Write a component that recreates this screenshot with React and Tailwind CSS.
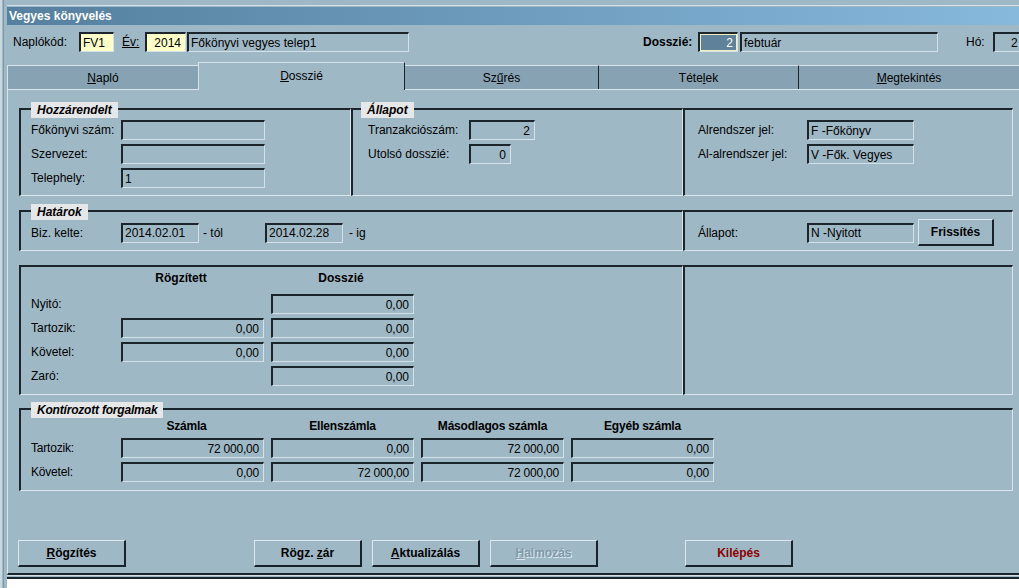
import React from "react";

const sunken =
  "flex h-[20px] shrink-0 items-center overflow-hidden whitespace-nowrap border-t-2 border-l-2 border-r border-b border-t-[#1c252c] border-l-[#1c252c] border-r-[#d5e1e8] border-b-[#d5e1e8] px-[2px]";

const Field = ({ value = "", right, className = "" }) => (
  <div className={`${sunken} ${right ? "justify-end pr-[4px]" : ""} ${className}`}>{value}</div>
);

const Box = ({ title, titleLeft = "left-[10px]", className = "", children }) => (
  <div
    className={`relative shrink-0 border-t-2 border-l-2 border-r border-b border-t-[#1c252c] border-l-[#1c252c] border-r-[#dbe5eb] border-b-[#dbe5eb] ${className}`}
  >
    {title && (
      <div className={`absolute top-[-8px] ${titleLeft} h-[16px] bg-[#e6e7e8] px-[6px] font-bold italic leading-[16px]`}>
        {title}
      </div>
    )}
    {children}
  </div>
);

const Row = ({ label, lw, children }) => (
  <div className="flex items-center">
    <span className={`shrink-0 whitespace-nowrap ${lw}`}>{label}</span>
    {children}
  </div>
);

const Btn = ({ children, className = "w-[108px]" }) => (
  <button
    className={`flex h-[27px] shrink-0 items-center justify-center border-t border-l border-t-[#dde7ed] border-l-[#dde7ed] border-r-2 border-b-2 border-r-[#17222a] border-b-[#17222a] font-bold ${className}`}
  >
    {children}
  </button>
);

const Tab = ({ children, className = "" }) => (
  <div
    className={`flex h-[24px] shrink-0 items-center justify-center border-t border-t-[#d8e3e9] bg-[#87a2b2] ${className}`}
  >
    {children}
  </div>
);

export default function App() {
  return (
    <div className="flex h-[588px] w-[1019px] overflow-hidden bg-[#9fb8c6] font-['Liberation_Sans',Arial,sans-serif] text-[12px] leading-[16px] text-black">
      {/* window frame */}
      <div className="flex h-full w-[7px] shrink-0 border-l-2 border-l-[#c9d7df]">
        <div className="ml-px h-full w-px bg-[#7f98a8]" />
      </div>

      <div className="flex w-[1012px] shrink-0 flex-col">
        <div className="h-[7px] pt-[5px]">
          <div className="h-px bg-[#d3e0e8]" />
        </div>
        <div className="flex h-[18px] items-center bg-linear-to-r from-[#55809f] to-[#87b9dd] pl-[2px] font-bold text-white">
          Vegyes könyvelés
        </div>

        {/* header */}
        <div className="flex h-[37px] items-start overflow-hidden pt-[7px]">
          <Row label="Naplókód:" lw="w-[72px] pl-[6px]">
            <Field value="FV1" className="w-[35px] bg-[#ffffc8]" />
          </Row>
          <span className="ml-[8px] w-[23px] shrink-0 leading-[20px] underline">Év:</span>
          <Field value="2014" right className="w-[41px] bg-[#ffffc8]" />
          <Field value="Főkönyvi vegyes telep1" className="ml-px w-[222px]" />
          <span className="ml-[234px] w-[55px] shrink-0 font-bold leading-[20px]">Dosszié:</span>
          <Field
            value="2"
            right
            className="w-[40px] bg-[#5f819a] text-white ring-1 ring-inset ring-[#f3f1c0]"
          />
          <Field value="febtuár" className="ml-[2px] w-[198px]" />
          <span className="ml-[28px] w-[27px] shrink-0 leading-[20px]">Hó:</span>
          <Field value="2" className="w-[40px] pl-[16px]" />
        </div>

        {/* tabs */}
        <div className="flex h-[27px] items-end">
          <Tab className="w-[191px] border-l border-l-[#d8e3e9]">
            <span>
              <u>N</u>apló
            </span>
          </Tab>
          <div className="relative z-10 -mb-px flex h-[28px] w-[207px] shrink-0 items-center justify-center border-t border-l border-r border-t-[#d8e3e9] border-l-[#d8e3e9] border-r-[#1c252c] bg-[#9fb8c6] pb-[2px]">
            <span>
              <u>D</u>osszié
            </span>
          </div>
          <Tab className="w-[194px] border-r border-r-[#1c252c]">
            <span>
              Sz<u>ű</u>rés
            </span>
          </Tab>
          <Tab className="w-[200px] border-r border-r-[#1c252c]">
            <span>
              Téte<u>l</u>ek
            </span>
          </Tab>
          <Tab className="flex-1">
            <span>
              <u>M</u>egtekintés
            </span>
          </Tab>
        </div>

        {/* panel */}
        <div className="flex h-[486px] flex-col border-t border-l border-b-2 border-t-[#dbe5eb] border-l-[#dbe5eb] border-b-[#1c252c] pl-[11px] pt-[18px]">
          {/* row A */}
          <div className="flex">
            <Box title="Hozzárendelt" className="h-[88px] w-[332px] pl-[10px] pt-[10px]">
              <div className="flex flex-col gap-[4px]">
                <Row label="Főkönyvi szám:" lw="w-[90px]">
                  <Field className="w-[144px]" />
                </Row>
                <Row label="Szervezet:" lw="w-[90px]">
                  <Field className="w-[144px]" />
                </Row>
                <Row label="Telephely:" lw="w-[90px]">
                  <Field value="1" className="w-[144px]" />
                </Row>
              </div>
            </Box>
            <Box title="Állapot" titleLeft="left-[8px]" className="h-[88px] w-[332px] pl-[15px] pt-[10px]">
              <div className="flex flex-col gap-[4px]">
                <Row label="Tranzakciószám:" lw="w-[101px]">
                  <Field value="2" right className="w-[66px]" />
                </Row>
                <Row label="Utolsó dosszié:" lw="w-[101px]">
                  <Field value="0" right className="w-[42px]" />
                </Row>
              </div>
            </Box>
            <Box className="h-[88px] w-[330px] pl-[13px] pt-[10px]">
              <div className="flex flex-col gap-[4px]">
                <Row label="Alrendszer jel:" lw="w-[109px]">
                  <Field value="F -Főkönyv" className="w-[107px]" />
                </Row>
                <Row label="Al-alrendszer jel:" lw="w-[109px]">
                  <Field value="V -Fők. Vegyes" className="w-[107px]" />
                </Row>
              </div>
            </Box>
          </div>

          {/* row B */}
          <div className="mt-[14px] flex">
            <Box title="Határok" className="h-[41px] w-[664px] pl-[10px] pt-[7px]">
              <div className="flex h-[27px] items-center">
                <span className="w-[90px] shrink-0">Biz. kelte:</span>
                <Field value="2014.02.01" className="w-[78px]" />
                <span className="w-[66px] shrink-0 pl-[4px]">- tól</span>
                <Field value="2014.02.28" className="w-[78px]" />
                <span className="ml-[6px]">- ig</span>
              </div>
            </Box>
            <Box className="h-[41px] w-[330px] pl-[13px] pt-[7px]">
              <div className="flex h-[27px] items-center">
                <span className="w-[109px] shrink-0">Állapot:</span>
                <Field value="N -Nyitott" className="w-[107px]" />
                <Btn className="ml-[4px] w-[76px]">Frissítés</Btn>
              </div>
            </Box>
          </div>

          {/* row C */}
          <div className="mt-[14px] flex">
            <Box className="h-[130px] w-[664px] pl-[10px] pt-[3px]">
              <div className="flex h-[16px] font-bold">
                <span className="w-[90px] shrink-0" />
                <span className="w-[120px] shrink-0 text-center">Rögzített</span>
                <span className="w-[200px] shrink-0 text-center">Dosszié</span>
              </div>
              <div className="mt-[8px] flex flex-col gap-[4px]">
                <Row label="Nyitó:" lw="w-[90px]">
                  <div className="w-[150px] shrink-0" />
                  <Field value="0,00" right className="w-[143px]" />
                </Row>
                <Row label="Tartozik:" lw="w-[90px]">
                  <Field value="0,00" right className="w-[143px]" />
                  <Field value="0,00" right className="ml-[7px] w-[143px]" />
                </Row>
                <Row label="Követel:" lw="w-[90px]">
                  <Field value="0,00" right className="w-[143px]" />
                  <Field value="0,00" right className="ml-[7px] w-[143px]" />
                </Row>
                <Row label="Zaró:" lw="w-[90px]">
                  <div className="w-[150px] shrink-0" />
                  <Field value="0,00" right className="w-[143px]" />
                </Row>
              </div>
            </Box>
            <Box className="h-[130px] w-[330px]" />
          </div>

          {/* row D */}
          <div className="mt-[13px] flex">
            <Box title="Kontírozott forgalmak" className="h-[83px] w-[994px] pl-[10px] pt-[8px] tracking-[-0.2px]">
              <div className="flex h-[16px] font-bold">
                <span className="w-[90px] shrink-0" />
                <span className="w-[143px] shrink-0 pr-[12px] text-center">Számla</span>
                <span className="ml-[7px] w-[143px] shrink-0 text-center">Ellenszámla</span>
                <span className="ml-[7px] w-[143px] shrink-0 text-center">Másodlagos számla</span>
                <span className="ml-[7px] w-[143px] shrink-0 text-center">Egyéb számla</span>
              </div>
              <div className="mt-[4px] flex flex-col gap-[4px]">
                <Row label="Tartozik:" lw="w-[90px]">
                  <Field value="72 000,00" right className="w-[143px]" />
                  <Field value="0,00" right className="ml-[7px] w-[143px]" />
                  <Field value="72 000,00" right className="ml-[7px] w-[143px]" />
                  <Field value="0,00" right className="ml-[7px] w-[143px]" />
                </Row>
                <Row label="Követel:" lw="w-[90px]">
                  <Field value="0,00" right className="w-[143px]" />
                  <Field value="72 000,00" right className="ml-[7px] w-[143px]" />
                  <Field value="72 000,00" right className="ml-[7px] w-[143px]" />
                  <Field value="0,00" right className="ml-[7px] w-[143px]" />
                </Row>
              </div>
            </Box>
          </div>

          {/* buttons */}
          <div className="-ml-px mt-[49px] flex">
            <Btn>
              <span>
                <u>R</u>ögzítés
              </span>
            </Btn>
            <Btn className="ml-[128px] w-[108px]">
              <span>
                Rögz. <u>z</u>ár
              </span>
            </Btn>
            <Btn className="ml-[10px] w-[108px]">
              <span>
                <u>A</u>ktualizálás
              </span>
            </Btn>
            <Btn className="ml-[10px] w-[108px] text-[#7f9aab] [text-shadow:1px_1px_0_#dfe8ee]">
              <span>
                <u>H</u>almozás
              </span>
            </Btn>
            <Btn className="ml-[87px] w-[108px] text-[#8b0000]">Kilépés</Btn>
          </div>
        </div>

        <div className="h-[4px] border-t border-b-2 border-t-[#d3e0e8] border-b-[#1c252c]" />
        <div className="flex-1 bg-white" />
      </div>
    </div>
  );
}
